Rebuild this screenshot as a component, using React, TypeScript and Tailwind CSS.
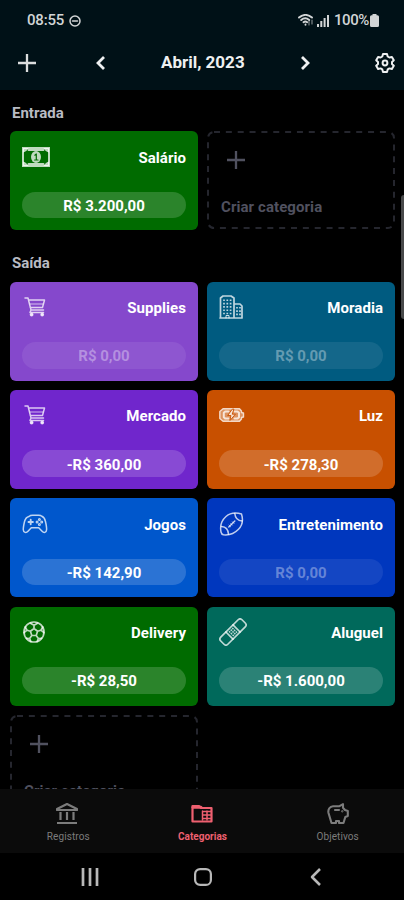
import React from "react";

type IconProps = { className?: string };
const base = { fill: "none", stroke: "currentColor", strokeLinecap: "round" as const, strokeLinejoin: "round" as const };

function Plus({ className = "" }: IconProps) {
  return <svg viewBox="0 0 18 18" className={`h-[18px] w-[18px] ${className}`} {...base} strokeLinecap="butt" strokeWidth="2.3"><path d="M9 0v18M0 9h18" /></svg>;
}
function Banknote() {
  return (
    <svg viewBox="0 0 28 20" className="h-5 w-7" {...base} strokeWidth="2">
      <path d="M1 1h26v18H1z" strokeLinejoin="miter" />
      <path d="M1 1h5.500C5.500 3 4 4.500 1 5.500zM27 1h-5.500c1 2 2.500 3.500 5.500 4.500zM1 19h5.500C5.500 17 4 15.500 1 14.500zM27 19h-5.500c1-2 2.500-3.500 5.500-4.500z" fill="currentColor" stroke="none" />
      <path d="M6.500 3h15M6.500 17h15" strokeWidth="1.800" />
      <ellipse cx="14" cy="10" rx="5" ry="6" fill="currentColor" stroke="none" />
      <path d="M12.800 8.200 14.300 7v5.500M12.600 13h3.400" stroke="#006b00" strokeWidth="1.200" />
    </svg>
  );
}
function Cart() {
  return (
    <svg viewBox="0 0 22 20" className="ml-[2px] h-5 w-[22px]" {...base} strokeWidth="1.5">
      <path d="M1 1h3l3 12h12.5M4.500 3h16l-2 7.500H6.200M7 13l-1 2.500h13.500" />
      <path d="M6 7h13" strokeOpacity=".6" />
      <circle cx="7.600" cy="17.600" r="1.200" fill="currentColor" /><circle cx="18.200" cy="17.600" r="1.200" fill="currentColor" />
    </svg>
  );
}
function Buildings() {
  return (
    <svg viewBox="0 0 24 24" className="h-6 w-6" {...base} strokeWidth="1.700">
      <path d="M1.500 23V3L4 1h8l3 2v20zM15 9h6l2 2v12h-8M1 23h22" />
      <path d="M5 4.500v16M8.300 4.500v16M11.600 4.500v16M18 12v9M21 12v9" strokeWidth="1.700" strokeDasharray="1.600 1.700" strokeLinecap="butt" />
      <path d="M7 23v-2.500h3V23" strokeWidth="1" />
    </svg>
  );
}
function Battery() {
  return (
    <svg viewBox="0 0 26 14" className="h-[14px] w-[26px]" {...base} strokeWidth="1.4">
      <path d="M4 .8h16.500l2 2.200v1.500l2 .5v4l-2 .5V11l-2 2.200H4L.8 10.500v-7z" fill="currentColor" fillOpacity=".5" />
      <path d="M9.500 3.500H6.200L4.800 4.800v4.400l1.400 1.300h3.300M15.500 3.500h3L20 4.800v4.400l-1.500 1.300h-3" strokeWidth="2" />
      <path d="m13 1.500-4.300 6h3.200L11 12.500l5.400-6.300h-3.200L14.800 1.500z" fill="currentColor" stroke="#c85000" strokeWidth=".9" />
    </svg>
  );
}
function Gamepad() {
  return (
    <svg viewBox="0 0 26 20" className="h-5 w-[26px]" {...base} strokeWidth="1.5">
      <path d="M7 2.500c1.700-1.700 3.300-1.200 5-1.200h3c2 0 3.200-.6 4.800 1 2 .8 3 2.200 3.600 5 .8 3.300 1.400 6 1.200 8.500-.2 3-2.800 3.400-4.500 1.500l-3.400-3.600H9.300L6 17.300c-1.700 1.900-4.600 1.500-4.700-1.500-.1-2.500.5-5.200 1.300-8.500C3.300 4.500 4.700 3.100 7 2.500z" />
      <path d="M8.700 5.800v4.400M6.500 8h4.400" strokeWidth="1.900" />
      <g strokeWidth="1.200"><circle cx="17.400" cy="5.500" r=".9" /><circle cx="19.700" cy="8" r=".9" /><circle cx="15.100" cy="8" r=".9" /><circle cx="17.400" cy="10.400" r=".9" /></g>
    </svg>
  );
}
function Football() {
  return (
    <svg viewBox="0 0 26 26" className="h-[26px] w-[26px]" {...base} strokeWidth="1.5">
      <path d="M2 21C.8 14.500 3 9 7 5.500 11 2 16 1 22.500 3c2 6.500.8 11.500-3 15.300C15.800 22.200 11 24.500 4.500 23.800 3 23.500 2.300 22.500 2 21z" />
      <path d="M2.500 15.500c4.200.3 6.700 3.300 7 7.700M15.800 2.500c.4 4.600 3.500 7.300 7.400 7.500M9.800 16l6-6" />
      <path d="m10 14.200 1.600 1.600M11.700 12.500l1.600 1.600M13.400 10.800l1.600 1.600" strokeWidth=".8" />
    </svg>
  );
}
function SoccerBall() {
  return (
    <svg viewBox="0 0 24 24" className="h-6 w-6" {...base} strokeWidth="1.7">
      <circle cx="12" cy="12" r="10" />
      <path d="m12 8.500 3.600 2.700-1.400 4.300H9.800l-1.400-4.300zM12 8.500V5.200M15.600 11.200l3.300-1M14.200 15.500l2.200 3M9.800 15.500l-2.200 3M8.400 11.200l-3.300-1M8.500 3.200 12 5.200l3.500-2M20.800 7l-1.900 3.200 3 2.500M19.500 18.400l-3.100.1-1.300 3M8.900 21.500l-1.300-3-3.100-.1M2.100 12.700l3-2.500L3.200 7" />
    </svg>
  );
}
function Bandage() {
  return (
    <svg viewBox="0 0 28 28" className="h-7 w-7" {...base} strokeWidth="1.700">
      <g transform="rotate(-45 14 14)"><rect x="-1" y="9" width="30" height="10" rx="2.7" />
        <path d="M9 9v10M19 9v10" /><path d="M11 11.500h6M11 14h6M11 16.500h6" strokeDasharray="1.500 .8" strokeLinecap="butt" /></g>
    </svg>
  );
}
function Gear() {
  return (
    <svg viewBox="0 0 20 20" className="h-5 w-5" {...base} strokeWidth="2">
      <path d="m8 1-.7 2.500-1.700 1L3.100 4 1.200 7.300 3 9v2l-1.800 1.700L3.100 16l2.500-.6 1.700 1L8 19h4l.7-2.600 1.700-1 2.500.6 1.900-3.300L17 11V9l1.800-1.700L16.900 4l-2.500.5-1.700-1L12 1z" />
      <circle cx="10" cy="10" r="2.400" />
    </svg>
  );
}

type Category = { name: string; value: string; color: string; icon: React.ReactNode; muted?: boolean };
const expenses: Category[] = [
  { name: "Supplies", value: "R$ 0,00", color: "bg-[#8548cc]", icon: <Cart />, muted: true },
  { name: "Moradia", value: "R$ 0,00", color: "bg-[#005b80]", icon: <Buildings />, muted: true },
  { name: "Mercado", value: "-R$ 360,00", color: "bg-[#7026cc]", icon: <Cart /> },
  { name: "Luz", value: "-R$ 278,30", color: "bg-[#c85000]", icon: <Battery /> },
  { name: "Jogos", value: "-R$ 142,90", color: "bg-[#0057cc]", icon: <Gamepad /> },
  { name: "Entretenimento", value: "R$ 0,00", color: "bg-[#0037be]", icon: <Football />, muted: true },
  { name: "Delivery", value: "-R$ 28,50", color: "bg-[#006b00]", icon: <SoccerBall /> },
  { name: "Aluguel", value: "-R$ 1.600,00", color: "bg-[#00695b]", icon: <Bandage /> },
];

function CategoryCard({ name, value, color, icon, muted }: Category) {
  return (
    <article className={`flex h-[99px] flex-col rounded-[6px] px-3 pt-[11px] ${color}`}>
      <div className="flex h-[49.500px] items-start justify-between">
        <div className="flex h-[29px] items-center text-white/75">{icon}</div>
        <h3 className="pt-[5.500px] text-[15px] leading-5 font-bold tracking-[.05px] text-white">{name}</h3>
      </div>
      <div className={`flex h-[26.500px] items-center justify-center rounded-full pt-[2px] text-[15px] leading-5 font-bold ${muted ? "bg-white/[.08] text-white/35" : "bg-white/[.17] text-white"}`}>{value}</div>
    </article>
  );
}
function CreateCard({ className = "" }: IconProps) {
  return (
    <article className={`relative h-[98px] text-[#50515f] ${className}`}>
      <svg className="absolute inset-0 h-full w-full" viewBox="0 0 188 98" {...base} stroke="#25262e" strokeWidth="2"><rect x="1" y="1" width="186" height="96" rx="6" strokeDasharray="6 5.850" strokeLinecap="butt" /></svg>
      <div className="pt-5 pl-5"><Plus /></div>
      <p className="pt-[28px] pl-[14px] text-[15px] leading-5 font-bold tracking-[.08px]">Criar categoria</p>
    </article>
  );
}

function StatusBar() {
  return (
    <div className="flex h-[41px] items-center justify-between pr-[25px] pl-[27px] text-[15px] text-[#d2d5d6]">
      <div className="flex items-center gap-[5px]"><span className="font-medium tracking-[-.2px]">08:55</span>
        <svg viewBox="0 0 12 12" className="h-3 w-3" {...base} strokeWidth="1.500"><circle cx="6" cy="6" r="5" /><path d="M3.500 6h5" /></svg></div>
      <div className="flex items-center gap-[3px]">
        <svg viewBox="0 0 16 13" className="h-[13px] w-4" {...base} strokeWidth="1.900"><path d="M1 3.500c4-3.500 9-3.500 13 0M3.200 6c2.500-2.200 5.500-2.200 8 0M5.500 8.200c1.200-1 2.500-1 3.700 0M7.500 10.500v.2" /><path d="M11 7v4M14 6v4" strokeWidth="1.200" strokeOpacity=".6" /></svg>
        <svg viewBox="0 0 12 12" className="h-3 w-3" fill="currentColor"><path d="M0 9h2v3H0zM3.300 6h2v6h-2zM6.600 3h2v9h-2zM10 0h2v12h-2z" /></svg>
        <span className="ml-[2px] font-medium tracking-[-.4px]">100%</span>
        <svg viewBox="0 0 9 13" className="-ml-[2px] h-[13px] w-[9px]" fill="currentColor"><path d="M2.500 0h4v1.200h1a1.500 1.500 0 0 1 1.500 1.500v8.800A1.500 1.500 0 0 1 7.500 13h-6A1.500 1.500 0 0 1 0 11.500V2.700A1.500 1.500 0 0 1 1.500 1.200h1z" /></svg>
      </div>
    </div>
  );
}

export default function App() {
  return (
    <main className="flex h-[900px] w-[404px] flex-col overflow-hidden bg-black font-[Roboto,'Noto_Sans',sans-serif]">
      <header className="h-[90px] shrink-0 bg-[#001117]">
        <StatusBar />
        <div className="grid h-[43px] grid-cols-[78px_65px_139px_75px_20px] items-center pl-[18px] text-[#eef0f1]">
          <Plus className="text-[#dbdddd]" />
          <svg viewBox="0 0 10 14" className="h-[14px] w-[10px]" {...base} strokeLinecap="butt" strokeLinejoin="miter" strokeWidth="2.800"><path d="m8 1-6 6 6 6" /></svg>
          <h1 className="pt-px text-[17px] font-bold whitespace-nowrap">Abril, 2023</h1>
          <svg viewBox="0 0 10 14" className="h-[14px] w-[10px]" {...base} strokeLinecap="butt" strokeLinejoin="miter" strokeWidth="2.800"><path d="m2 1 6 6-6 6" /></svg>
          <Gear />
        </div>
      </header>
      <section className="relative h-[699px] shrink-0 overflow-hidden pt-[13px] pr-[9px] pl-[10px]">
        <h2 className="mb-[8px] ml-[2px] text-[15px] leading-5 font-bold text-[#b9bbc3]">Entrada</h2>
        <div className="grid grid-cols-2 gap-[9px]">
          <CategoryCard name="Salário" value="R$ 3.200,00" color="bg-[#006b00]" icon={<Banknote />} />
          <CreateCard />
        </div>
        <h2 className="mt-[23px] mb-[8.500px] ml-[2px] text-[15px] leading-5 font-bold text-[#b9bbc3]">Saída</h2>
        <div className="grid grid-cols-2 gap-x-[9px] gap-y-[9.400px]">{expenses.map((item) => <CategoryCard key={item.name} {...item} />)}<CreateCard /></div>
        <div className="absolute top-[105px] right-0 h-[124px] w-[3px] rounded-l-full bg-[#48494a]" />
      </section>
      <nav className="grid h-[64px] shrink-0 grid-cols-3 bg-[#0b0b0b] text-[10px] text-[#7c7c7c]">
        <div className="flex flex-col items-center pt-[14px]">
          <svg viewBox="0 0 22 22" className="h-[22px] w-[22px]" {...base} strokeLinecap="butt" strokeWidth="2.200"><path d="M1 7V6l10-5 10 5v1zM4.500 9v8M11 9v8M17.500 9v8M1 20h20" /></svg>
          <span className="mt-[5px] ml-[2px] leading-[14px] tracking-[.1px]">Registros</span>
        </div>
        <div className="flex flex-col items-center pt-[14px] font-bold text-[#ef6070]">
          <svg viewBox="0 0 22 22" className="h-[22px] w-[22px]" {...base} strokeWidth="2.200"><path d="M1.500 3v15.500h19V5H10L8 3z" /><path d="M2 4.300h8" strokeWidth="3" /><path d="M11.500 8v9M16 8v9M11.500 8.500H20M11.500 12H20M11.500 15.500H20" strokeWidth="1.500" /></svg>
          <span className="mt-[5px] ml-[1px] leading-[14px]">Categorias</span>
        </div>
        <div className="flex flex-col items-center pt-[14px]">
          <svg viewBox="0 0 22 22" className="ml-[2px] h-[22px] w-[22px]" {...base} strokeWidth="2.100"><path d="M6 3.200h6.500L16 1.200v3.500l2 2.300 2.800 1v5l-2.500 1-1.800 6H12v-2H9v2H4.500L1.500 10c-.8-3.500 1.500-6.800 4.500-6.800z" /><path d="M8 7h4" /><circle cx="15.300" cy="8.300" r=".4" strokeWidth="1.500" /></svg>
          <span className="mt-[5px] ml-[2px] leading-[14px] tracking-[.1px]">Objetivos</span>
        </div>
      </nav>
      <footer className="grid h-[47px] shrink-0 grid-cols-3 items-center justify-items-center pr-[31px] pl-[33px] text-[#b8b8b8]">
        <svg viewBox="0 0 18 18" className="h-[18px] w-[18px]" {...base} strokeLinecap="butt" strokeWidth="2.700"><path d="M2 0v18M9 0v18M16 0v18" /></svg>
        <svg viewBox="0 0 18 18" className="h-[18px] w-[18px]" {...base} strokeWidth="2.200"><rect x="1.100" y="1.100" width="15.800" height="15.800" rx="5" /></svg>
        <svg viewBox="0 0 12 18" className="h-[18px] w-3" {...base} strokeLinecap="butt" strokeWidth="2.500"><path d="m10 1-8 8 8 8" /></svg>
      </footer>
    </main>
  );
}
